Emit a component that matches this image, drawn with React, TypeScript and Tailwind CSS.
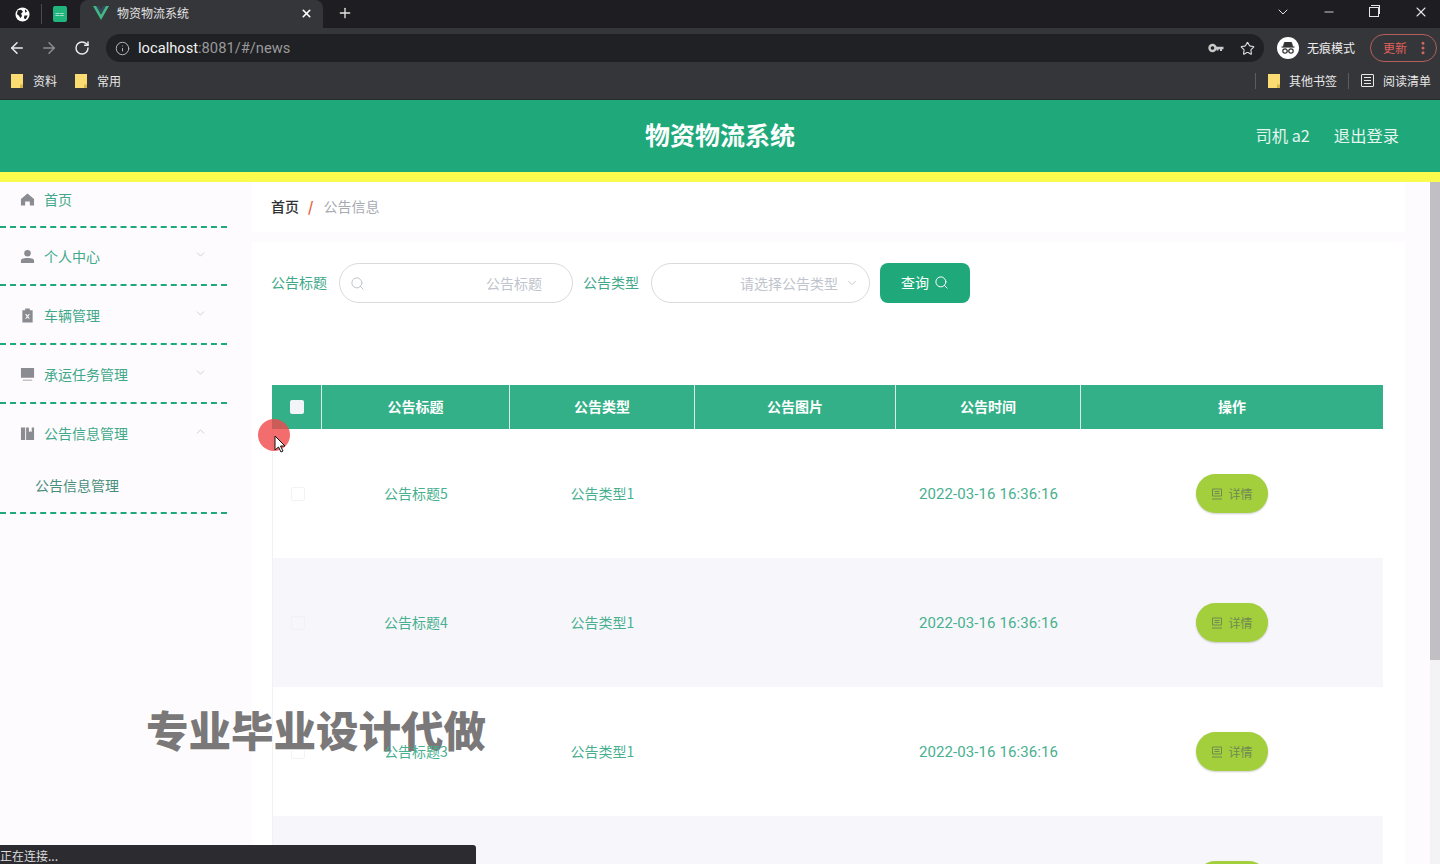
import React from 'react'
import { ArrowLeft, ArrowRight, RotateCw, Info, Star, X, Plus, ChevronDown, ChevronUp, Minus, Search, MoreVertical } from 'lucide-react'

const HomeIcon = () => (
	<svg viewBox="0 0 16 16" className="w-[15px] h-[15px] fill-[#8b8b92]">
		<path d="M8 1.5 1 7.5V14.5H5.5V10H10.5V14.5H15V7.5Z" />
	</svg>
)

const UserIcon = () => (
	<svg viewBox="0 0 16 16" className="w-[15px] h-[15px] fill-[#8b8b92]">
		<circle cx="8" cy="4.5" r="3.5" />
		<path d="M1 15V12.5C1 10.5 3 9.5 8 9.5S15 10.5 15 12.5V15Z" />
	</svg>
)

const CarIcon = () => (
	<svg viewBox="0 0 16 16" className="w-[15px] h-[15px] fill-[#8b8b92]">
		<path d="M5.5 0.5H10.5V2.5H13.5V15.5H2.5V2.5H5.5ZM5.5 6.5 7.2 9 5.5 11.5H6.8L8 9.8 9.2 11.5H10.5L8.8 9 10.5 6.5H9.2L8 8.2 6.8 6.5Z" fillRule="evenodd" />
	</svg>
)

const MonitorIcon = () => (
	<svg viewBox="0 0 16 16" className="w-[15px] h-[15px] fill-[#8b8b92]">
		<path d="M1 1H15V11.5H1ZM3 13.5H13V14.5H3Z" />
	</svg>
)

const BookIcon = () => (
	<svg viewBox="0 0 16 16" className="w-[15px] h-[15px] fill-[#8b8b92]">
		<path d="M1 1.5H5.5V15H1ZM6.5 1.5H9.5V6.5L11 5.5 12.5 6.5V1.5H15V15H6.5Z" />
	</svg>
)

const Folder = () => (
	<svg viewBox="0 0 12 14" className="w-3 h-[14px]">
		<path d="M0 0H12V14H0Z" fill="#fbdc73" />
		<path d="M9 14V10.5H12V14Z" fill="#d9b64c" />
	</svg>
)

const Globe = () => (
	<svg viewBox="0 0 16 16" className="w-[15px] h-[15px]">
		<circle cx="8" cy="8" r="7.5" fill="#fff" />
		<path d="M3 3.5 6.5 3 8.5 5 6.5 7 7.5 9.5 5.5 12 4.5 9.5 2 7.5ZM10 9H13.5L11.5 13 9.5 12Z" fill="#1e1e22" />
		<path d="M10.5 2.5 13 4.5 11 6Z" fill="#1e1e22" />
	</svg>
)

const KeyIcon = () => (
	<svg viewBox="0 0 16 10" className="w-4 h-[10px]">
		<circle cx="4.5" cy="5" r="3" fill="none" stroke="#c8c8c8" strokeWidth="2.4" />
		<path d="M7.5 3.8H15.5V6.2H14V8H12V6.2H10.5V7.5H8.5V6.2H7.5Z" fill="#c8c8c8" />
	</svg>
)

const Incognito = () => (
	<div className="w-[22px] h-[22px] rounded-full bg-white flex items-center justify-center">
		<svg viewBox="0 0 16 16" className="w-4 h-4 fill-none stroke-[#333]">
			<path d="M4.5 2.5H11.5L12.5 6.5H3.5Z" fill="#333" />
			<path d="M1.5 7H14.5" strokeWidth="1.2" />
			<circle cx="5" cy="11" r="2.2" strokeWidth="1.2" />
			<circle cx="11" cy="11" r="2.2" strokeWidth="1.2" />
			<path d="M7.2 11H8.8" strokeWidth="1.2" />
		</svg>
	</div>
)

const menus = [
	{ name: '个人中心', icon: <UserIcon />, rowClass: 'h-[58px]' },
	{ name: '车辆管理', icon: <CarIcon />, rowClass: 'h-[59px] pt-[2px]' },
	{ name: '承运任务管理', icon: <MonitorIcon />, rowClass: 'h-[59px] pt-[2px]' },
]

const rows = [
	{ title: '公告标题5', bg: 'bg-white' },
	{ title: '公告标题4', bg: 'bg-[#f7f7fb]' },
	{ title: '公告标题3', bg: 'bg-white' },
	{ title: '公告标题2', bg: 'bg-[#f7f7fb]' },
]

const App = () => {
	return (
		<div className="relative w-[1440px] h-[864px] overflow-hidden bg-[#fdfbfd] font-['Noto_Sans_CJK_SC','Noto_Sans',sans-serif]">

			{/* tab strip */}
			<div className="h-[28px] bg-[#1e1e22] flex items-center">
				<div className="w-[42px] h-[20px] flex justify-center items-center pl-[4px] border-r border-[#4a4a4e]">
					<Globe />
				</div>
				<div className="w-[38px] flex justify-center pr-[3px]">
					<div className="w-[14px] h-[16px] rounded-[2px] bg-[#1fb57d] flex items-center justify-center text-white text-[8px] leading-none">==</div>
				</div>
				<div className="w-[243px] h-full bg-[#35363a] rounded-t-lg flex items-center pl-[13px] pr-[10px] pb-[2px]">
					<svg viewBox="0 0 16 14" className="w-4 h-[14px]">
						<path d="M0 0H3.2L8 8.5 12.8 0H16L8 14Z" fill="#41b883" />
						<path d="M3.2 0H6L8 3.5 10 0H12.8L8 8.5Z" fill="#35495e" />
					</svg>
					<span className="ml-[8px] text-[12px] text-[#e3e3e3]">物资物流系统</span>
					<X className="ml-auto w-[13px] h-[13px] text-white" strokeWidth={3} />
				</div>
				<Plus className="ml-[14px] w-[16px] h-[16px] text-[#e4e4e4] -mt-[2px]" strokeWidth={2} />
				<div className="ml-auto flex items-center text-[#e6e6e6] -mt-[4px]">
					<ChevronDown className="w-[16px] h-[16px] mr-[31px]" strokeWidth={1.5} />
					<Minus className="w-[14px] h-[14px] mr-[33px]" strokeWidth={1.5} />
					<div className="relative w-[10px] h-[10px] border border-[#e6e6e6] mr-[34px] bg-[#1e1e22]">
						<div className="absolute -top-[3px] left-[1px] w-[9px] h-[9px] border-t border-r border-[#e6e6e6]"></div>
					</div>
					<X className="w-[16px] h-[16px] mr-[11px]" strokeWidth={1.6} />
				</div>
			</div>

			{/* address bar */}
			<div className="h-[40px] bg-[#35363a] flex items-center">
				<ArrowLeft className="ml-[8px] w-[18px] h-[18px] text-[#ededed]" strokeWidth={2} />
				<ArrowRight className="ml-[14px] w-[18px] h-[18px] text-[#8d8d90]" strokeWidth={2} />
				<RotateCw className="ml-[16px] w-[16px] h-[16px] text-[#ededed]" strokeWidth={2.2} />
				<div className="ml-[16px] w-[1158px] h-[28px] rounded-full bg-[#202124] flex items-center pl-[9px] pr-[9px]">
					<Info className="w-[15px] h-[15px] text-[#b5b5b5]" strokeWidth={1.6} />
					<span className="ml-[8px] text-[14.7px] text-[#f1f1f1] font-['Roboto',sans-serif]">localhost<span className="text-[#9a9a9a]">:8081/#/news</span></span>
					<div className="ml-auto mr-[16px]"><KeyIcon /></div>
					<Star className="w-[15px] h-[15px] text-[#dcdcdc]" strokeWidth={1.8} />
				</div>
				<div className="ml-[13px] flex items-center w-[90px]">
					<Incognito />
					<span className="ml-[8px] text-[12px] text-[#ececec] whitespace-nowrap">无痕模式</span>
				</div>
				<div className="ml-[3px] w-[67px] h-[28px] rounded-full border border-[#b4605c] flex items-center pl-[12px]">
					<span className="text-[12px] text-[#e0605a]">更新</span>
					<MoreVertical className="ml-[8px] w-[16px] h-[16px] text-[#d06a62]" strokeWidth={2.5} />
				</div>
			</div>

			{/* bookmarks */}
			<div className="h-[32px] pb-[6px] bg-[#35363a] flex items-center text-[12px] text-[#e8e8e8] border-b border-[#2a2a2d]">
				<div className="ml-[11px]"><Folder /></div>
				<span className="ml-[10px]">资料</span>
				<div className="ml-[18px]"><Folder /></div>
				<span className="ml-[10px]">常用</span>
				<div className="ml-auto w-px h-[16px] bg-[#5c5c60]"></div>
				<div className="ml-[12px]"><Folder /></div>
				<span className="ml-[9px]">其他书签</span>
				<div className="ml-[11px] w-px h-[16px] bg-[#5c5c60]"></div>
				<div className="ml-[12px] w-[13px] h-[13px] border border-[#e8e8e8] rounded-[1px] flex flex-col justify-center gap-[2px] px-[2px]">
					<div className="h-px bg-[#e8e8e8]"></div>
					<div className="h-px bg-[#e8e8e8]"></div>
					<div className="h-px bg-[#e8e8e8]"></div>
				</div>
				<span className="ml-[9px] mr-[9px]">阅读清单</span>
			</div>

			{/* site header */}
			<div className="relative h-[72px] bg-[#1fa97b] flex items-center justify-center pb-[2px]">
				<h1 className="text-[25px] font-bold text-white">物资物流系统</h1>
				<div className="absolute right-[41px] top-0 h-full pb-[2px] flex items-center gap-[24px] text-[16.3px] text-[#e4f5ee]">
					<span>司机 a2</span>
					<span>退出登录</span>
				</div>
			</div>
			<div className="h-[10px] bg-[#fbfb4d]"></div>

			<div className="flex">
				{/* sidebar */}
				<div className="w-[227px] shrink-0 text-[14px] text-[#3fa98a]">
					<div className="h-[46px] pb-[10px] pl-[20px] flex items-center gap-[9px] border-b-2 border-dashed border-[#1fa97b]">
						<HomeIcon />
						<span>首页</span>
					</div>
					{menus.map((m) => (
						<div key={m.name} className={`${m.rowClass} pl-[20px] pr-[20px] flex items-center border-b-2 border-dashed border-[#1fa97b]`}>
							{m.icon}
							<span className="ml-[9px]">{m.name}</span>
							<ChevronDown className="ml-auto -mt-[4px] w-[13px] h-[13px] text-[#c4c8cc]" strokeWidth={1.5} />
						</div>
					))}
					<div className="h-[110px] border-b-2 border-dashed border-[#1fa97b]">
						<div className="h-[59px] pl-[20px] pr-[20px] flex items-center">
							<BookIcon />
							<span className="ml-[9px]">公告信息管理</span>
							<ChevronUp className="ml-auto -mt-[4px] w-[13px] h-[13px] text-[#c4c8cc]" strokeWidth={1.5} />
						</div>
						<div className="pl-[35px] text-[#4a8f7c] leading-[44px]">公告信息管理</div>
					</div>
				</div>

				{/* main */}
				<div className="ml-[25px] w-[1153px] shrink-0">
					<div className="h-[50px] bg-white pl-[19px] flex items-center text-[14px] pb-[2px]">
						<span className="text-[#303133] font-medium">首页</span>
						<span className="mx-[9px] text-[#e8603c] font-bold">/</span>
						<span className="ml-[1px] text-[#a8abb2]">公告信息</span>
					</div>

					<div className="mt-[10px] bg-white pl-[20px]">
						<div className="pt-[21px] h-[143px] flex items-start text-[14px]">
							<span className="-ml-[1px] w-[57px] h-[40px] leading-[38px] text-[#3fa98a]">公告标题</span>
							<div className="ml-[11px] w-[234px] h-[40px] rounded-full border border-[#d8dade] flex items-center pl-[10px] pr-[30px]">
								<Search className="w-[15px] h-[15px] text-[#c0c4cc]" strokeWidth={1.6} />
								<span className="ml-auto text-[#c0c4cc]">公告标题</span>
							</div>
							<span className="ml-[10px] w-[57px] h-[40px] leading-[38px] text-[#3fa98a]">公告类型</span>
							<div className="ml-[11px] w-[219px] h-[40px] rounded-full border border-[#d8dade] flex items-center pr-[10px]">
								<span className="ml-auto text-[#c0c4cc]">请选择公告类型</span>
								<ChevronDown className="ml-[7px] w-[14px] h-[14px] text-[#c0c4cc]" strokeWidth={1.6} />
							</div>
							<div className="ml-[10px] w-[90px] h-[40px] rounded-lg bg-[#1fa97b] flex items-center justify-center text-white pb-[1px]">
								<span>查询</span>
								<Search className="ml-[5px] w-[15px] h-[15px]" strokeWidth={1.6} />
							</div>
						</div>

						<table className="w-[1111px] table-fixed border-separate border-spacing-0 text-[14px]">
							<thead>
								<tr className="h-[44px] bg-[#33b087] text-white font-bold">
									<th className="w-[50px] border-r border-[#d9efe7]">
										<div className="mx-auto w-[14px] h-[14px] rounded-[2px] bg-[#f2f4f8]"></div>
									</th>
									<th className="w-[188px] border-r border-[#d9efe7] pb-[2px]">公告标题</th>
									<th className="w-[185px] border-r border-[#d9efe7] pb-[2px]">公告类型</th>
									<th className="w-[201px] border-r border-[#d9efe7] pb-[2px]">公告图片</th>
									<th className="w-[185px] border-r border-[#d9efe7] pb-[2px]">公告时间</th>
									<th className="pb-[2px]">操作</th>
								</tr>
							</thead>
							<tbody>
								{rows.map((r) => (
									<tr key={r.title} className={`h-[129px] ${r.bg} text-center text-[#48b08f]`}>
										<td className="border-l border-[#f1f1f5]">
											<div className="mx-auto w-[14px] h-[14px] rounded-[2px] border border-[#f1f2f5]"></div>
										</td>
										<td><span className="relative z-10">{r.title}</span></td>
										<td>公告类型1</td>
										<td></td>
										<td className="pt-[2px] text-[15px] tracking-[0.1px] font-['Roboto',sans-serif]">2022-03-16 16:36:16</td>
										<td>
											<div className="mx-auto w-[72px] h-[39px] rounded-full bg-[#a3cf3c] flex items-center justify-center gap-[5px] text-[12px] text-[#6f8a52] shadow-[0_1px_2px_rgba(0,0,0,0.2)]">
												<svg viewBox="0 0 12 12" className="w-[12px] h-[12px] fill-none stroke-[#6f8a52]">
													<path d="M1.5 1H10.5V8H1.5ZM3.5 3.5H8.5M3.5 5.5H8.5M1 11H11" />
												</svg>
												<span>详情</span>
											</div>
										</td>
									</tr>
								))}
							</tbody>
						</table>
					</div>
				</div>

				{/* scrollbar */}
				<div className="ml-[25px] w-[10px] h-[682px] bg-[#f3f2f5]">
					<div className="h-[478px] bg-[#c1bfc3]"></div>
				</div>
			</div>

			{/* recording overlays */}
			<div className="absolute left-[258px] top-[419px] w-[32px] h-[32px] rounded-full bg-[#f0484b]/80"></div>
			<svg viewBox="0 0 12 18" className="absolute left-[274px] top-[435px] w-[12px] h-[18px]">
				<path d="M1 1V15L4.5 12 7 17 9 16 6.5 11H11Z" fill="#fff" stroke="#111" strokeWidth="1" />
			</svg>
			<div className="absolute left-[146px] top-[699px] text-[42.5px] leading-[60px] font-black text-[#7a7878] whitespace-nowrap [text-shadow:1px_1px_0_#fff,-1px_-1px_0_#fff,1px_-1px_0_#fff,-1px_1px_0_#fff]">专业毕业设计代做</div>
			<div className="absolute left-0 bottom-0 w-[476px] h-[19px] bg-[#2b2b30] rounded-tr-[3px] text-[12px] leading-[21px] text-[#dcdcdc]">正在连接...</div>
		</div>
	)
}

export default App
